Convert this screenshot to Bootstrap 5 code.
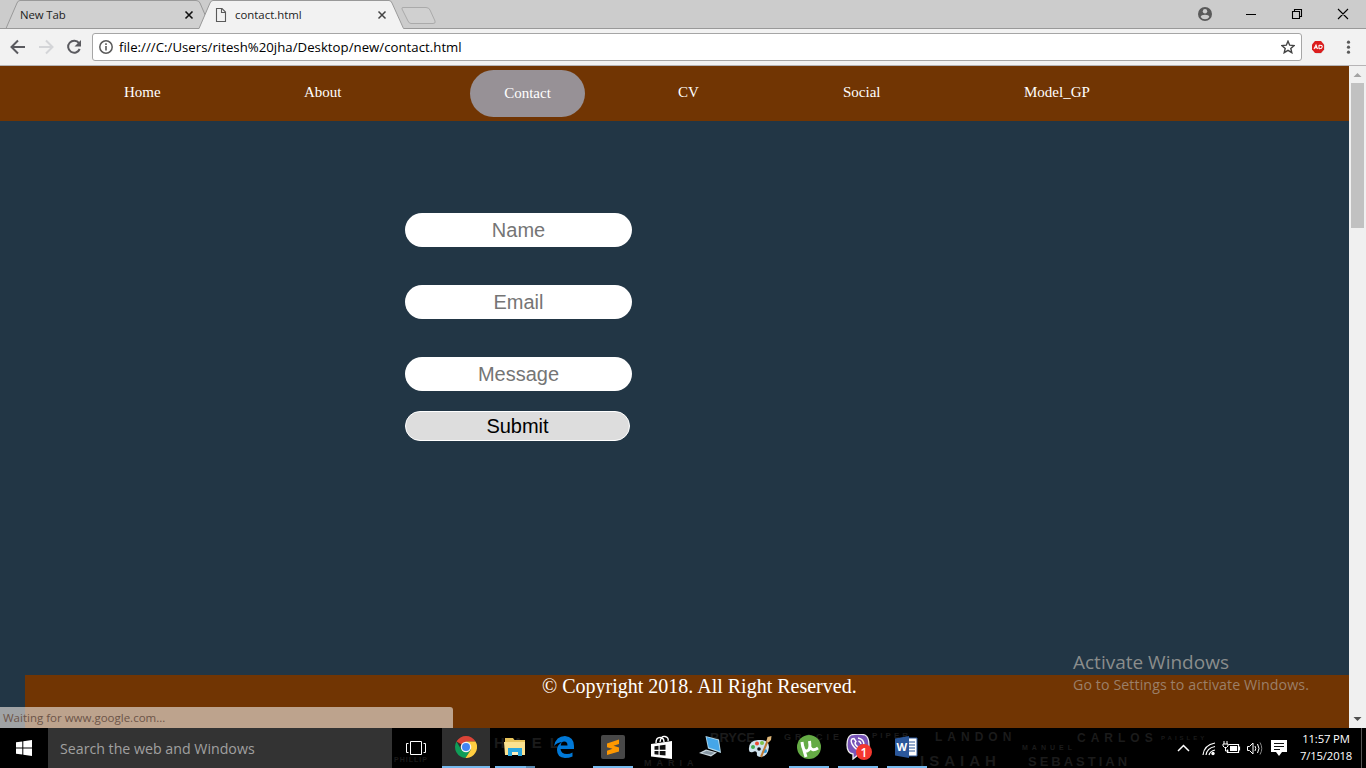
<!DOCTYPE html>
<html lang="en">
<head>
<meta charset="utf-8">
<meta name="viewport" content="width=device-width, initial-scale=1">
<title>contact.html</title>
<link href="https://cdn.jsdelivr.net/npm/bootstrap@5.3.0/dist/css/bootstrap.min.css" rel="stylesheet">
<script src="https://cdn.jsdelivr.net/npm/bootstrap@5.3.0/dist/js/bootstrap.bundle.min.js"></script>
<style>
  body { height: 768px; font-family: "Open Sans", "Noto Sans", sans-serif; line-height: 1; color: #000; }
  svg { display: block; flex: none; }
  .t { white-space: nowrap; }

  .tabstrip { height: 29px; background: #ccc; }
  .tabshapes { left: 0; top: 0; }
  .tab-label { font-size: 11.4px; color: #222; }
  .tab-one { margin-left: 20px; width: 215px; letter-spacing: -.1px; }
  .wincontrols { margin-right: 17px; }

  .toolbar { height: 37px; background: #f2f2f2; border-bottom: 1px solid #b6b4b6; padding-left: 10px; }
  .navicons { width: 82px; }
  .omnibox { width: 1210px; height: 28px; margin-top: 4px; background: #fff; border: 1px solid #a6a6a6; border-radius: 3px; padding: 0 6px 0 6px; }
  .url { font-size: 13.2px; letter-spacing: .03px; margin-left: 6px; padding-top: 1px; }

  .viewport { height: 662px; background: #223645; }
  .sitenav { height: 55px; background: #713503; font: 15px/17px "Liberation Serif", serif; color: #fff; padding-left: 124px; }
  .sitenav a { color: #fff; text-decoration: none; margin-top: 18px; flex: none; }
  .sitenav a.current { width: 115px; height: 47px; margin: 4px 93px 0 0; line-height: 47px; border-radius: 24px; background: #979196; text-align: center; }
  .w-home { width: 180px; } .w-about { width: 166px; } .w-cv { width: 165px; } .w-social { width: 181px; }
  .contact { padding: 92px 0 0 405px; }
  .contact input { width: 227px; height: 34px; margin-bottom: 38px; border: 0; border-radius: 17px; font: 20px "Liberation Sans", sans-serif; text-align: center; padding: 0; box-shadow: none; }
  .contact input.last { margin-bottom: 20px; }
  .contact input::placeholder { color: #757575; opacity: 1; }
  .contact button { width: 225px; height: 30px; border: 1px solid #fff; border-radius: 15px; background: #ddd; color: #000; font: 20px/24px "Liberation Sans", sans-serif; padding: 0; }
  .sitefoot { margin-left: 25px; height: 53px; background: #713503; color: #fff; font: 20px/23px "Liberation Serif", serif; padding-left: 517px; }
  .scroller { width: 17px; background: #f0f0f0; }
  .thumb { width: 13px; height: 145px; background: #c1c1c1; margin-top: 1px; }
  .statusbubble { left: 0; bottom: 0; width: 453px; height: 21px; background: rgba(232,226,219,.64); border-radius: 0 3px 0 0; font-size: 11.5px; line-height: 21px; color: #6c5448; padding-left: 3px; }
  .activate { left: 1073px; top: 585px; color: #8a8d8c; }
  .activate .big { font-size: 19px; line-height: 22px; }
  .activate .sub { font-size: 14.2px; line-height: 23px; color: #9b7f68; letter-spacing: .1px; }

  .taskbar { height: 40px; background: #000; color: #fff; }
  .wall { left: 0; top: 0; font-family: "Liberation Sans", sans-serif; }
  .start { width: 48px; }
  .searchbox { width: 344px; background: #333; color: #a0a0a0; font-size: 14.2px; padding: 2px 0 0 12px; }
  .taskview { width: 50px; padding-left: 14px; }
  .app { width: 49px; height: 40px; border-bottom: 2px solid transparent; flex: none; }
  .app.run::after { content: ""; position: absolute; left: 4px; right: 5px; bottom: -2px; height: 2px; background: #76b9ed; }
  .app.stacked::after { background: linear-gradient(90deg, #76b9ed 31px, #5a8ab0 31px); }
  .app > svg { margin-right: 1px; }
  .app.active { background: rgba(50,50,50,.95); width: 48px; margin-right: 1px; }
  .app.active > svg { margin-right: 0; }
  .app.active::after { left: 0; right: 0; }
  .clock { font-size: 11.3px; line-height: 17px; width: 56px; margin: 2px 7px 0 8px; text-align: center; letter-spacing: -.15px; }
  .showdesk { width: 5px; border-left: 1px solid #555; }
</style>
</head>
<body class="m-0 overflow-hidden d-flex flex-column">

<header class="tabstrip position-relative d-flex align-items-center justify-content-between">
  <svg class="tabshapes position-absolute" width="1366" height="29">
    <path d="M6 28L18 1H198L206 17L200 28Z" fill="#d0d0d0"/>
    <path d="M6 28.500L17 3Q18 .5 20 .5H196Q199 .5 200 3L206 17" fill="none" stroke="#999"/>
    <path d="M199 29L210 3Q211 .5 213 .5H389Q391 .5 392 3L404 29Z" fill="#f2f2f2"/>
    <path d="M0 28.500H199L210 3Q211 .5 213 .5H389Q391 .5 392 3L403.500 28.500H1366" fill="none" stroke="#999"/>
    <path d="M403 7.500H426Q429 7.500 430 10L435 21Q436 23.500 433 23.500H411Q409 23.500 408 21L402 9Q401.500 7.500 403 7.500Z" fill="#d0d0d0" stroke="#aaa"/>
    <path d="M185.500 11.500l7 7m0-7l-7 7" stroke="#111" stroke-width="1.600"/>
    <path d="M378.500 11.500l7 7m0-7l-7 7" stroke="#444" stroke-width="1.500"/>
    <path d="M216.500 8.500H222L225.500 12V21.500H216.500ZM221.500 8.500V12.500H225.500" fill="none" stroke="#5a5a5a" stroke-width="1.100"/>
  </svg>
  <div class="d-flex position-relative tab-label">
    <span class="t tab-one">New Tab</span><span class="t">contact.html</span>
  </div>
  <svg class="wincontrols position-relative" width="152" height="28">
    <circle cx="8" cy="13" r="7" fill="#5a5a5a"/><circle cx="8" cy="10.300" r="2.200" fill="#ccc"/><path d="M3.700 16Q4 13.800 8 13.800T12.300 16Q11 18.200 8 18.200T3.700 16Z" fill="#ccc"/>
    <path d="M49 13.500h10M95.500 10.500h7v7h-7zM97.500 10.500v-2h7v7h-2M141 8l10 10m0-10l-10 10" fill="none" stroke="#000" stroke-width="1.100"/>
  </svg>
</header>

<div class="toolbar d-flex align-items-start">
  <svg class="navicons" width="82" height="36" fill="none" stroke-width="2">
    <path d="M15 18H2.500M8 11.500L1.500 18L8 24.500" stroke="#5a5a5f"/>
    <path d="M29 18H41.500M36 11.500L42.500 18L36 24.500" stroke="#d4d5d8"/>
    <path d="M69 14.200A6 6 0 1 0 69.700 20" stroke="#5a5a5f"/><path d="M71 11v6.500h-6.500z" fill="#5a5a5f"/>
  </svg>
  <div class="omnibox d-flex align-items-center">
    <svg width="14" height="14"><circle cx="7" cy="7" r="6.200" fill="none" stroke="#5a5a5a" stroke-width="1.500"/><path d="M7 6v4.500M7 3.300v1.600" stroke="#5a5a5a" stroke-width="1.600"/></svg>
    <span class="t url">file:///C:/Users/ritesh%20jha/Desktop/new/contact.html</span>
    <svg class="ms-auto" width="14" height="14"><path d="M7 1.200L8.700 5.200L13 5.600L9.800 8.400L10.800 12.700L7 10.400L3.200 12.700L4.200 8.400L1 5.600L5.300 5.200Z" fill="none" stroke="#444" stroke-width="1.400"/></svg>
  </div>
  <svg width="64" height="36">
    <path d="M13.500 12.500h5.500l3.500 3.500v4.500l-3.500 4h-5l-3-3.500v-4.500z" fill="#ccc"/>
    <path d="M13 12h6l3 3.500v5l-3 3.500h-6l-3-3.500v-5z" fill="#dc1e1e"/>
    <path d="M12 20l2-4l1.500 4M12.800 18.800h2.200M17 16v4M17 16.300q3.500-.3 3.200 1.700t-3.200 1.800" fill="none" stroke="#fff" stroke-width="1.100"/>
    <g fill="#5a5a5a"><circle cx="46.500" cy="13.200" r="1.600"/><circle cx="46.500" cy="18.200" r="1.600"/><circle cx="46.500" cy="23.200" r="1.600"/></g>
  </svg>
</div>

<main class="viewport d-flex position-relative">
  <div class="flex-grow-1 d-flex flex-column">
    <nav class="sitenav d-flex align-items-start">
      <a class="w-home" href="#">Home</a>
      <a class="w-about" href="#">About</a>
      <a class="current" href="#">Contact</a>
      <a class="w-cv" href="#">CV</a>
      <a class="w-social" href="#">Social</a>
      <a href="#">Model_GP</a>
    </nav>
    <form class="contact d-flex flex-column align-items-start">
      <input type="text" placeholder="Name">
      <input type="email" placeholder="Email">
      <input class="last" type="text" placeholder="Message">
      <button type="button">Submit</button>
    </form>
    <footer class="sitefoot mt-auto t">© Copyright 2018. All Right Reserved.</footer>
  </div>
  <div class="scroller d-flex flex-column align-items-center">
    <svg width="17" height="16"><path d="M4.500 11h8l-4-4z" fill="#a3a3a3"/></svg>
    <div class="thumb"></div>
    <svg class="mt-auto" width="17" height="17"><path d="M4.500 6h8l-4 4z" fill="#505050"/></svg>
  </div>
  <div class="statusbubble position-absolute t">Waiting for www.google.com...</div>
  <div class="activate position-absolute t"><div class="big">Activate Windows</div><div class="sub">Go to Settings to activate Windows.</div></div>
</main>

<footer class="taskbar d-flex position-relative">
  <svg class="wall position-absolute" width="1366" height="40" aria-hidden="true" fill="#1b1b1b" font-weight="700">
    <text x="394" y="34" font-size="7" letter-spacing="1">PHILLIP</text>
    <text x="494" y="20" font-size="15" letter-spacing="8">HAEL</text>
    <text x="644" y="38" font-size="9" letter-spacing="5">MARIA</text>
    <text x="710" y="14" font-size="13">BRYCE</text>
    <text x="784" y="12" font-size="9" letter-spacing="4">GRACIE</text>
    <text x="872" y="10" font-size="8" letter-spacing="3">PIPER</text>
    <text x="935" y="13" font-size="12" letter-spacing="5">LANDON</text>
    <text x="1022" y="22" font-size="7" letter-spacing="4">MANUEL</text>
    <text x="1077" y="14" font-size="12" letter-spacing="5">CARLOS</text>
    <text x="1161" y="12" font-size="6" letter-spacing="3">PAISLEY</text>
    <text x="920" y="38" font-size="15" letter-spacing="5">ISAIAH</text>
    <text x="1028" y="38" font-size="13" letter-spacing="3">SEBASTIAN</text>
  </svg>
  <div class="start d-flex align-items-center justify-content-center position-relative">
    <svg width="16" height="16" fill="#fff"><path d="M0 2.300L6.300 1.400V7.500H0zM7.300 1.200L16 0V7.500H7.300zM0 8.500H6.300V14.600L0 13.700zM7.300 8.500H16V16L7.300 14.800z"/></svg>
  </div>
  <div class="searchbox d-flex align-items-center position-relative t">Search the web and Windows</div>
  <div class="taskview d-flex align-items-center position-relative">
    <svg width="20" height="14" fill="none" stroke="#fff"><path d="M4.500.5h11v13h-11zM2.500 2.500h-2v9h2M17.500 2.500h2v9h-2"/></svg>
  </div>

  <div class="app run active position-relative d-flex align-items-center justify-content-center">
    <svg width="22" height="22" viewBox="0 0 22 22"><path d="M11 11L1.500 5.500A11 11 0 0 1 20.500 5.500H11Z" fill="#db4437"/><path d="M1.500 5.500A11 11 0 0 0 10.500 22L15.800 13.700L6.300 13.800Z" fill="#0f9d58"/><path d="M20.500 5.500A11 11 0 0 1 10.500 22L15.800 13.700L11 5.500Z" fill="#ffcd40"/><circle cx="11" cy="11" r="5.300" fill="#f4f4f4"/><circle cx="11" cy="11" r="4" fill="#4285f4"/></svg>
  </div>
  <div class="app run stacked position-relative d-flex align-items-center justify-content-center">
    <svg width="22" height="20"><path d="M1 1h8l1.500 2H21v15H1z" fill="#e8c45c"/><path d="M0 5h21v13H1z" fill="#fbe290"/><path d="M4 11h14v8h-4v-4H8v4H4z" fill="#2aa8e0"/><path d="M8 15h6v3H8z" fill="#fff0bd"/></svg>
  </div>
  <div class="app position-relative d-flex align-items-center justify-content-center">
    <svg width="20" height="22"><path d="M0 10Q2 0 11 0Q20 1 20 10V13H6.500Q7 18 13 18Q16 18 18.500 16.500V20.500Q15 22 11 22Q3 21.500 3 14Q3 9 8 6Q3 6.500 0 10ZM6.700 9.500H13.500Q13.500 5.500 10.200 5.500Q7.200 5.500 6.700 9.500Z" fill="#0078d7" fill-rule="evenodd"/></svg>
  </div>
  <div class="app run position-relative d-flex align-items-center justify-content-center">
    <svg width="24" height="24"><rect width="24" height="24" rx="2" fill="#484848"/><path d="M6 8.500L18 4.500V9L12.500 10.800L18 12.500V16.500L6 20V15.700L11.500 13.800L6 12.200z" fill="#ff9800"/></svg>
  </div>
  <div class="app position-relative d-flex align-items-center justify-content-center">
    <svg width="22" height="24"><path d="M0 9L21 6V24L0 21.500Z" fill="#fff"/><path d="M5 8Q5 2.500 9 2.500T13 7M9 7Q10 .5 14 1.500T17 6" fill="none" stroke="#fff" stroke-width="1.400"/><path d="M3.500 11.300l4-.5v4h-4zM8.700 10.600l5.800-.8v5H8.700zM3.500 16h4v3.700l-4-.4zM8.700 16h5.800v4.500l-5.800-.6z" fill="#111"/></svg>
  </div>
  <div class="app position-relative d-flex align-items-center justify-content-center">
    <svg width="24" height="24"><path d="M6.500 1L20 4.500L22 18L9 13.500Z" fill="#b8dcec"/><path d="M7.500 2L19 5.200L21 16.300L9.700 12.500Z" fill="#45a6e8"/><path d="M0 18L7 14.500L18 17.500L12 21.500Z" fill="#cbd8df"/><path d="M3 18L7.500 15.700L15.500 17.700L12 20Z" fill="#8797a3"/></svg>
  </div>
  <div class="app position-relative d-flex align-items-center justify-content-center">
    <svg width="24" height="24"><path d="M1 15Q0 6 10 5Q21 4 21 12Q20 21 13 22Q8 22 9 18Q8 15 5 17Q1 18 1 15Z" fill="#cfe2ee"/><circle cx="5" cy="12" r="2" fill="#42ad50"/><circle cx="9" cy="8.500" r="2" fill="#ee4b31"/><circle cx="14" cy="8" r="2" fill="#7cc14a"/><circle cx="11" cy="14" r="1.800" fill="#111"/><circle cx="17" cy="16" r="2" fill="#2696df"/><path d="M13 22L20 5" stroke="#bd7b36" stroke-width="2"/><path d="M18.500 6l1-4 4-1-.5 4-2.500 2.500z" fill="#dfb678"/></svg>
  </div>
  <div class="app run position-relative d-flex align-items-center justify-content-center">
    <svg width="24" height="24"><circle cx="12" cy="12" r="12" fill="#65ab45"/><path d="M5 7Q6 17 10 16Q14 15 12.500 6M13 12Q15 17 21 13M6 12L9 22" fill="none" stroke="#fff" stroke-width="3"/></svg>
  </div>
  <div class="app run position-relative d-flex align-items-center justify-content-center">
    <svg width="28" height="26"><path d="M7 1Q14-1 21 1Q25 3 25 11Q25 18 21 20Q16 21 14 21L9 25V20Q3 19 3 11Q3 3 7 1Z" fill="#7854b8" stroke="#eee" stroke-width="1.300"/><path d="M8 5Q6 7 9 11.500T17 17L19 15L16 12.500L14.500 13.500Q11 11 11 9L12 7.500L10 4.500ZM14 4Q20 5 20 11M14.500 7Q17 8 17 10" fill="none" stroke="#fff" stroke-width="1.400"/><circle cx="20" cy="18" r="8" fill="#f4382f"/><text x="20" y="22.500" text-anchor="middle" font-size="12" font-weight="600" fill="#fff">1</text></svg>
  </div>
  <div class="app run position-relative d-flex align-items-center justify-content-center">
    <svg width="24" height="22"><path d="M12 2h10v18H12z" fill="#fff" stroke="#2b579a"/><path d="M14 6h6M14 9h6M14 12h6M14 15h6" stroke="#2b579a"/><path d="M0 2.500L14 0V22L0 19.500z" fill="#2b579a"/><text x="6.800" y="15" text-anchor="middle" font-size="11" font-weight="700" fill="#fff">W</text></svg>
  </div>

  <div class="d-flex ms-auto position-relative">
    <svg width="114" height="40" fill="none" stroke="#fff">
      <path d="M2 23L7.500 17.500L13 23" stroke-width="1.500"/>
      <path d="M27 27Q28 17 39 15M30 27Q31 20 39 18.500M33 27Q34 23 39 22" stroke-width="1.200"/><circle cx="37" cy="25.500" r="1.700" fill="#fff" stroke="none"/>
      <path d="M52.500 16.500h10v8h-11v-3M63.500 18.500v4" stroke-width="1.200"/><path d="M54 18h7v5h-7z" fill="#fff" stroke="none"/><path d="M48 13v3M51 13v3M47 16h5v2l-1.500 1.500h-2L47 18zM49.500 19v4h3"/>
      <path d="M71.500 18.500h2l3.500-3.500v11l-3.500-3.500h-2zM79 18q1.500 2.500 0 5M81.500 16q3 4.500 0 9"/><path d="M84 14.500q3.500 6 0 12" stroke="#888"/>
      <path d="M95 12h16v12h-5l-3 4l-3-4h-5z" fill="#fff" stroke="none"/><path d="M98 15.500h10M98 18.500h10M98 21.500h6" stroke="#111"/>
    </svg>
    <div class="clock t">11:57 PM<br>7/15/2018</div>
    <div class="showdesk"></div>
  </div>
</footer>
</body>
</html>
